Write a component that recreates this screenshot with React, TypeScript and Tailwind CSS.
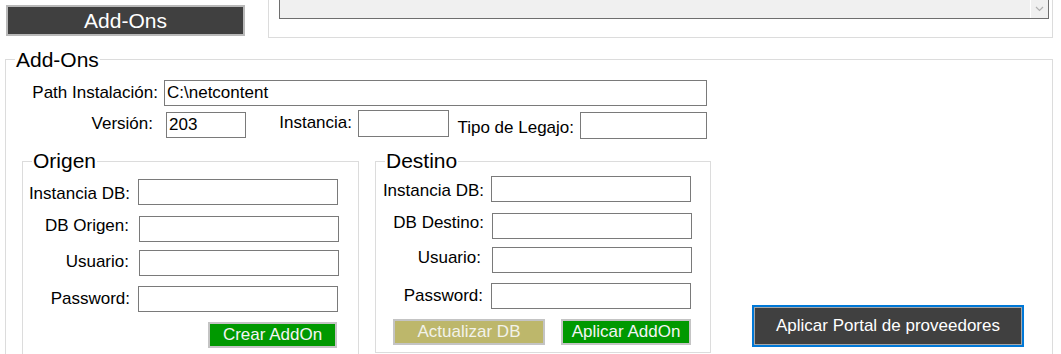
import React from "react";

function Box({ className, children }: { className: string; children?: React.ReactNode }) {
  return (
    <div className={"border border-[#7a7a7a] bg-white text-[17px] leading-[18px] pl-[2px] flex items-center " + className}>
      {children}
    </div>
  );
}

function Label({ className, children }: { className: string; children: React.ReactNode }) {
  return <div className={"text-right text-[17px] leading-[18px] whitespace-nowrap " + className}>{children}</div>;
}

export default function App() {
  return (
    <div className="w-[1061px] h-[354px] overflow-hidden bg-white text-black font-['Liberation_Sans',Arial,sans-serif]">
      {/* top row */}
      <div className="flex items-start">
        <button className="ml-[6px] mt-[5px] w-[239px] h-[31px] border-2 border-[#b9b9b9] bg-[#404040] text-white text-[21px] leading-[24px] flex items-center justify-center">
          Add-Ons
        </button>
        <div className="ml-[23px] w-[785px] h-[38px] border-x border-b border-[#dcdcdc]">
          <div className="ml-[10px] w-[770px] h-[19px] border-x border-b border-[#6e6e6e] bg-[#f0f0f0] flex justify-end">
            <div className="w-[18px] h-full border-l border-white flex items-center justify-center">
              <svg width="9" height="6" viewBox="0 0 9 6">
                <polyline points="1,1 4.5,4.5 8,1" fill="none" stroke="#b0b0b0" strokeWidth="1.2" />
              </svg>
            </div>
          </div>
        </div>
      </div>

      {/* main groupbox */}
      <div className="relative ml-[5px] mt-[21px] w-[1048px] h-[320px] border border-[#dcdcdc]">
        <span className="absolute left-[9px] top-[-12px] bg-white px-[1px] text-[21px] leading-[24px]">Add-Ons</span>

        {/* row 1 */}
        <div className="flex items-start mt-[20px]">
          <Label className="w-[152px] mt-[4px]">Path Instalación:</Label>
          <Box className="ml-[6px] w-[543px] h-[26px]">C:\netcontent</Box>
        </div>

        {/* row 2 */}
        <div className="flex items-start mt-[4px]">
          <Label className="w-[147px] mt-[5px]">Versión:</Label>
          <Box className="ml-[13px] mt-[2px] w-[80px] h-[26px]">203</Box>
          <Label className="ml-[32px] w-[74px] mt-[4px]">Instancia:</Label>
          <Box className="ml-[6px] w-[91px] h-[27px]" />
          <Label className="ml-[8px] w-[117px] mt-[9px]">Tipo de Legajo:</Label>
          <Box className="ml-[6px] mt-[2px] w-[127px] h-[27px]" />
        </div>

        {/* row 3 */}
        <div className="flex items-start mt-[22px]">
          {/* Origen */}
          <div className="relative ml-[16px] w-[337px] h-[200px] border border-[#dcdcdc]">
            <span className="absolute left-[9px] top-[-13px] bg-white px-[1px] text-[21px] leading-[24px]">Origen</span>
            <div className="flex items-start mt-[17px]">
              <Label className="w-[107px] mt-[6px]">Instancia DB:</Label>
              <Box className="ml-[8px] w-[200px] h-[26px]" />
            </div>
            <div className="flex items-start mt-[11px]">
              <Label className="w-[106px] mt-[1px]">DB Origen:</Label>
              <Box className="ml-[10px] w-[200px] h-[26px]" />
            </div>
            <div className="flex items-start mt-[8px]">
              <Label className="w-[106px] mt-[3px]">Usuario:</Label>
              <Box className="ml-[10px] w-[200px] h-[26px]" />
            </div>
            <div className="flex items-start mt-[10px]">
              <Label className="w-[107px] mt-[4px]">Password:</Label>
              <Box className="ml-[8px] w-[200px] h-[26px]" />
            </div>
            <div className="flex mt-[10px]">
              <button className="ml-[185px] w-[129px] h-[26px] border-2 border-[#c4c4c4] bg-[#009900] text-[#f4f4f4] text-[17px] leading-[18px] flex items-center justify-center">
                Crear AddOn
              </button>
            </div>
          </div>

          {/* Destino */}
          <div className="relative ml-[16px] w-[336px] h-[192px] border border-[#dcdcdc]">
            <span className="absolute left-[9px] top-[-13px] bg-white px-[1px] text-[21px] leading-[24px]">Destino</span>
            <div className="flex items-start mt-[14px]">
              <Label className="w-[108px] mt-[6px]">Instancia DB:</Label>
              <Box className="ml-[7px] w-[200px] h-[26px]" />
            </div>
            <div className="flex items-start mt-[11px]">
              <Label className="w-[108px] mt-[1px]">DB Destino:</Label>
              <Box className="ml-[8px] w-[200px] h-[26px]" />
            </div>
            <div className="flex items-start mt-[8px]">
              <Label className="w-[105px] mt-[2px]">Usuario:</Label>
              <Box className="ml-[11px] w-[200px] h-[26px]" />
            </div>
            <div className="flex items-start mt-[10px]">
              <Label className="w-[107px] mt-[4px]">Password:</Label>
              <Box className="ml-[8px] w-[200px] h-[26px]" />
            </div>
            <div className="flex mt-[10px]">
              <button className="ml-[17px] w-[152px] h-[26px] border-2 border-[#c4c4c4] bg-[#bdb76b] text-[#f2f2ea] text-[17px] leading-[18px] flex items-center justify-center">
                Actualizar DB
              </button>
              <button className="ml-[16px] w-[130px] h-[26px] border-2 border-[#c4c4c4] bg-[#009900] text-[#f4f4f4] text-[17px] leading-[18px] flex items-center justify-center">
                Aplicar AddOn
              </button>
            </div>
          </div>

          {/* Portal button */}
          <button className="ml-[41px] mt-[144px] w-[272px] h-[42px] border-2 border-[#0078d7] shadow-[inset_0_0_0_1px_#a8a8a8] bg-[#404040] text-white text-[17px] leading-[18px] flex items-center justify-center">
            Aplicar Portal de proveedores
          </button>
        </div>
      </div>
    </div>
  );
}
